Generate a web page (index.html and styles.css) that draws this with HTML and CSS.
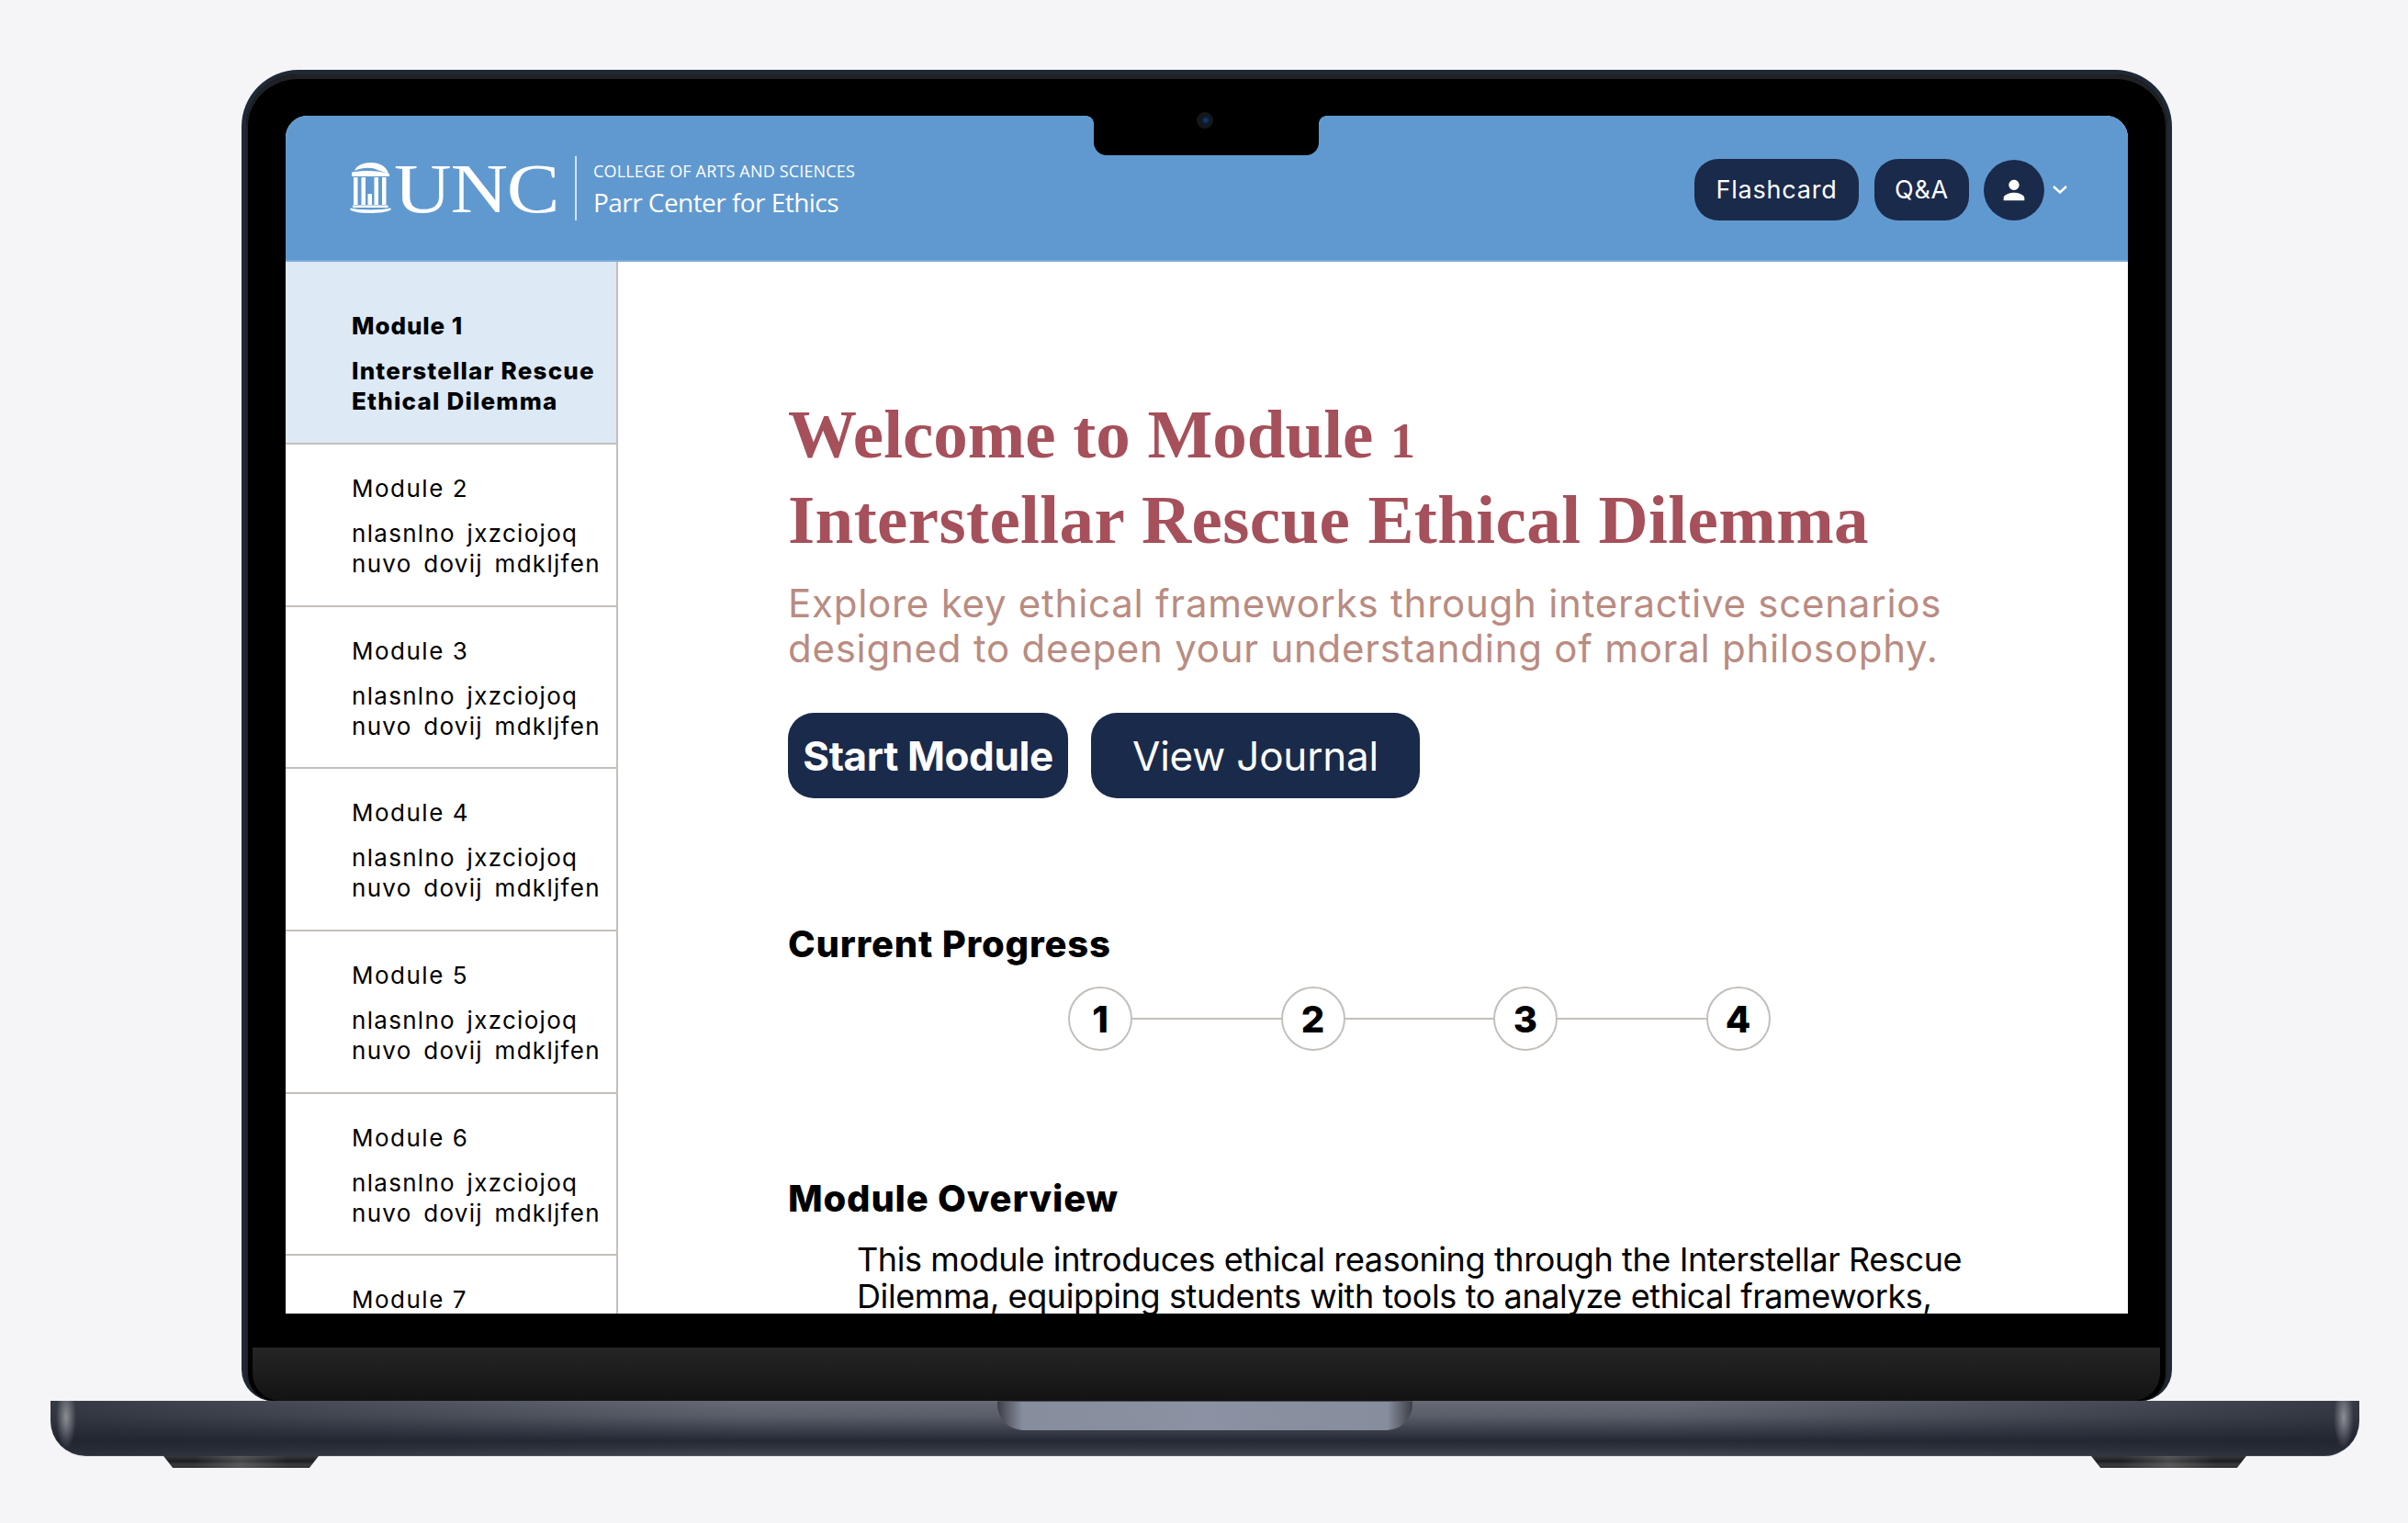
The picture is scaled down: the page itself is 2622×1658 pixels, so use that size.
FILE: index.html
```html
<!DOCTYPE html>
<html lang="en">
<head>
    <meta charset="UTF-8">
    <meta name="viewport" content="width=device-width, initial-scale=1.0">
    <title>Parr Center for Ethics</title>
    <link rel="stylesheet" href="styles.css">
</head>
<body>
    <div class="laptop">
        <div class="lid">
            <div class="bezel">
                <div class="notch"><span class="camera"></span></div>
                <div class="screen">
                    <div class="navbar">
                        <div class="brand">
                            <svg class="well" viewBox="0 0 45 55" fill="#fff">
                                <path d="M5 9C7 3 15 0 23 0c9 0 17 4 19 12L30 8C24 5 14 5 5 9z"/>
                                <path d="M2 10.500c12-2.500 29-2 41 1.500v3H2z"/>
                                <rect x="4" y="16" width="4.500" height="30"/>
                                <rect x="12.500" y="16" width="4.500" height="30"/>
                                <rect x="26.500" y="16" width="4.500" height="30"/>
                                <rect x="35" y="16" width="4.500" height="30"/>
                                <rect x="19.500" y="34" width="4.500" height="12"/>
                                <path d="M3 46.500h38l1 2.500H3z"/>
                                <path d="M1 49.500c10 2.500 33 2.500 43 0l1 1.500c-4 3-14 4-24 4-10 0-18-1.500-21-4z"/>
                            </svg>
                            <div class="unc-box"><span class="unc">UNC</span></div>
                            <div class="brand-text">
                                <span class="college">COLLEGE OF ARTS AND SCIENCES</span>
                                <span class="center">Parr Center for Ethics</span>
                            </div>
                        </div>
                        <div class="nav-actions">
                            <a class="pill pill-flash" href="#">Flashcard</a>
                            <a class="pill pill-qa" href="#">Q&amp;A</a>
                            <a class="avatar" href="#">
                                <svg viewBox="0 0 24 24" width="34" height="34" fill="#fff"><path d="M12 12c2.210 0 4-1.790 4-4s-1.790-4-4-4-4 1.790-4 4 1.790 4 4 4zm0 2c-2.670 0-8 1.340-8 4v2h16v-2c0-2.660-5.330-4-8-4z"/></svg>
                            </a>
                            <svg class="chevron" viewBox="0 0 16 9" width="16" height="9" fill="none" stroke="#fff" stroke-width="2.400"><path d="M1 1l7 6.500L15 1"/></svg>
                        </div>
                    </div>
                    <div class="content">
                        <ul class="sidebar">
                            <li class="module active">
                                <div class="module-name">Module 1</div>
                                <div class="module-title">Interstellar Rescue Ethical Dilemma</div>
                            </li>
                            <li class="module">
                                <div class="module-name">Module 2</div>
                                <div class="module-title">nlasnlno jxzciojoq nuvo dovij mdkljfen</div>
                            </li>
                            <li class="module">
                                <div class="module-name">Module 3</div>
                                <div class="module-title">nlasnlno jxzciojoq nuvo dovij mdkljfen</div>
                            </li>
                            <li class="module">
                                <div class="module-name">Module 4</div>
                                <div class="module-title">nlasnlno jxzciojoq nuvo dovij mdkljfen</div>
                            </li>
                            <li class="module">
                                <div class="module-name">Module 5</div>
                                <div class="module-title">nlasnlno jxzciojoq nuvo dovij mdkljfen</div>
                            </li>
                            <li class="module">
                                <div class="module-name">Module 6</div>
                                <div class="module-title">nlasnlno jxzciojoq nuvo dovij mdkljfen</div>
                            </li>
                            <li class="module">
                                <div class="module-name">Module 7</div>
                            </li>
                        </ul>
                        <div class="main-content">
                            <h1><span class="first-line">Welcome to Module <span class="oldstyle">1</span></span><br>Interstellar Rescue Ethical Dilemma</h1>
                            <p class="lead">Explore key ethical frameworks through interactive scenarios<br>designed to deepen your understanding of moral philosophy.</p>
                            <div class="hero-actions">
                                <a class="btn btn-start" href="#">Start Module</a>
                                <a class="btn btn-journal" href="#">View Journal</a>
                            </div>
                            <h2 class="progress-title">Current Progress</h2>
                            <div class="steps">
                                <span class="step">1</span>
                                <span class="step-line"></span>
                                <span class="step">2</span>
                                <span class="step-line"></span>
                                <span class="step">3</span>
                                <span class="step-line"></span>
                                <span class="step">4</span>
                            </div>
                            <h2 class="overview-title">Module Overview</h2>
                            <p class="overview">This module introduces ethical reasoning through the Interstellar Rescue<br>Dilemma, equipping students with tools to analyze ethical frameworks,</p>
                        </div>
                    </div>
                </div>
                <div class="chin"></div>
            </div>
        </div>
        <div class="base"><div class="hinge"></div></div>
        <div class="feet">
            <span class="foot"></span>
            <span class="foot"></span>
        </div>
    </div>
</body>
</html>
```

FILE: styles.css
```css
* {
    box-sizing: border-box;
}

body {
    font-family: 'Inter', sans-serif;
    margin: 0;
    height: 1658px;
    overflow: hidden;
    background-color: #f5f5f8;
    padding: 76px 0 0 55px;
}

a {
    text-decoration: none;
    color: #fff;
}

.laptop {
    width: 2514px;
}

/* lid */
.lid {
    width: 2102px;
    height: 1449px;
    margin-left: 208px;
    border: 5px solid #1e2935;
    border-bottom: none;
    border-radius: 62px 62px 34px 34px;
    background-color: #000;
}

.bezel {
    position: relative;
    height: 100%;
    padding-top: 40px;
    background-color: #000;
    border: solid #202124;
    border-width: 5px 2px 0;
    border-radius: 57px 57px 30px 30px;
}

.notch {
    position: absolute;
    top: 40px;
    left: 921px;
    width: 245px;
    height: 43px;
    background-color: #000;
    border-radius: 0 0 14px 14px;
    z-index: 2;
}

.notch::before,
.notch::after {
    content: '';
    position: absolute;
    top: 0;
    width: 8px;
    height: 8px;
}

.notch::before {
    left: -8px;
    background: radial-gradient(circle at 0 100%, transparent 7.500px, #000 8px);
}

.notch::after {
    right: -8px;
    background: radial-gradient(circle at 100% 100%, transparent 7.500px, #000 8px);
}

.camera {
    position: absolute;
    top: -4px;
    left: 112px;
    width: 18px;
    height: 18px;
    border-radius: 50%;
    background: radial-gradient(circle at 55% 50%, #16407e 0, #0c1a2c 32%, #151719 50%, #151719 100%);
}

.screen {
    width: 2006px;
    height: 1304px;
    margin-left: 41px;
    border-radius: 24px 24px 0 0;
    background-color: #fff;
    overflow: hidden;
    color: #000;
}

.chin {
    height: 58px;
    margin: 37px 6px 0 5px;
    border-radius: 0 0 30px 30px;
    background: linear-gradient(#252525, #131313);
}

/* navbar */
.navbar {
    height: 159px;
    padding: 47px 66px 47px 70px;
    display: flex;
    justify-content: space-between;
    align-items: center;
    background-color: #6099d0;
    border-bottom: 2px solid #7fabd9;
}

.brand {
    display: flex;
    align-items: center;
    color: #fff;
}

.well {
    width: 45px;
    height: 55px;
    flex: none;
}

.unc-box {
    width: 197px;
    margin-left: 3px;
    padding-top: 3px;
}

.unc {
    display: inline-block;
    font-family: 'Liberation Serif', serif;
    font-size: 76px;
    line-height: 55px;
    letter-spacing: -1px;
    transform: scaleX(1.14);
    transform-origin: left center;
}

.brand-text {
    height: 70px;
    padding: 1px 0 2px 18px;
    border-left: 2px solid #d6e4f2;
    display: flex;
    flex-direction: column;
    justify-content: space-between;
}

.college {
    font-family: 'Open Sans', sans-serif;
    font-size: 18px;
    line-height: 30px;
    letter-spacing: 0.16px;
}

.center {
    font-family: 'Open Sans', sans-serif;
    font-size: 28px;
    line-height: 36px;
    letter-spacing: -0.55px;
}

.nav-actions {
    display: flex;
    align-items: center;
    margin-top: 4px;
}

.pill {
    height: 67px;
    display: flex;
    align-items: center;
    justify-content: center;
    background-color: #1a2a4b;
    border-radius: 26px;
    font-size: 27px;
    letter-spacing: 0.8px;
}

.pill-flash {
    width: 179px;
}

.pill-qa {
    width: 103px;
    margin-left: 17px;
}

.avatar {
    width: 66px;
    height: 66px;
    margin-left: 16px;
    border-radius: 50%;
    background-color: #1a2a4b;
    display: flex;
    align-items: center;
    justify-content: center;
}

.chevron {
    margin-left: 9px;
    flex: none;
}

/* sidebar + main */
.content {
    display: flex;
    height: 1145px;
}

.sidebar {
    list-style-type: none;
    margin: 0;
    padding: 0;
    width: 362px;
    flex: none;
    border-right: 2px solid #c4bfba;
}

.module {
    height: 176.700px;
    padding: 31px 4px 0 72px;
    border-bottom: 2px solid #c4bfba;
    font-size: 26px;
    line-height: 33px;
    letter-spacing: 1.5px;
}

.module-title {
    letter-spacing: 1.3px;
    word-spacing: 4px;
}

.module.active {
    height: 199px;
    padding-top: 53px;
    background-color: #dde9f5;
    font-weight: 800;
    letter-spacing: 0.9px;
}

.module.active .module-title {
    letter-spacing: 1.2px;
    word-spacing: 0;
}

.module-name {
    margin-bottom: 16px;
}

.main-content {
    flex: 1;
    padding: 141px 0 0 185px;
    overflow: hidden;
}

h1 {
    margin: 0;
    font-family: 'Liberation Serif', serif;
    font-size: 75px;
    line-height: 93px;
    font-weight: 700;
    letter-spacing: 0.4px;
    color: #a5505a;
}

.first-line {
    letter-spacing: 0;
}

.oldstyle {
    font-size: 54px;
    line-height: 0;
}

.lead {
    margin: 21px 0 0;
    font-size: 42px;
    line-height: 48.500px;
    letter-spacing: 0.75px;
    color: #b98c82;
}

.hero-actions {
    display: flex;
    gap: 25px;
    margin-top: 46px;
}

.btn {
    height: 93px;
    display: flex;
    align-items: center;
    justify-content: center;
    background-color: #1a2a4b;
    border-radius: 28px;
    font-size: 44px;
}

.btn-start {
    width: 305px;
    font-weight: 700;
    letter-spacing: -0.4px;
}

.btn-journal {
    width: 358px;
    letter-spacing: -0.2px;
}

h2 {
    margin: 0;
    font-size: 40px;
    line-height: 48px;
    font-weight: 800;
    letter-spacing: 0.8px;
}

.progress-title {
    margin-top: 135px;
}

.steps {
    display: flex;
    align-items: center;
    margin: 22px 0 0 305px;
}

.step {
    width: 70px;
    height: 70px;
    flex: none;
    display: flex;
    align-items: center;
    justify-content: center;
    border: 2px solid #c4bfba;
    border-radius: 50%;
    font-size: 40px;
    font-weight: 800;
}

.step-line {
    width: 161.500px;
    height: 2px;
    background-color: #c4bfba;
}

.overview-title {
    margin-top: 137px;
}

.overview {
    margin: 22px 0 0;
    padding-left: 75px;
    font-size: 36px;
    line-height: 40px;
    letter-spacing: -0.4px;
    white-space: nowrap;
}

/* base */
.base {
    height: 60px;
    display: flex;
    justify-content: center;
    border-radius: 0 0 38px 38px;
    box-shadow: 0 1px 0 #d8d9de;
    background:
        radial-gradient(ellipse 11px 34px at 17px 18px, rgba(190, 190, 195, 0.65), transparent),
        radial-gradient(ellipse 11px 34px at calc(100% - 17px) 18px, rgba(190, 190, 195, 0.65), transparent),
        linear-gradient(90deg, rgba(32, 36, 46, 0.7), transparent 30%, transparent 70%, rgba(32, 36, 46, 0.7)),
        linear-gradient(#666b75 0, #585d68 28%, #3e434f 50%, #242934 72%, #2c313c 82%, #40454f 100%);
}

.hinge {
    width: 452px;
    height: 32px;
    border-radius: 0 0 28px 28px;
    border-top: 1px solid #4a4d55;
    background: linear-gradient(90deg, #3d3f46 0, #868d9c 6%, #8a92a3 50%, #868d9c 94%, #3d3f46 100%);
}

.feet {
    display: flex;
    justify-content: space-between;
    padding: 0 123px;
}

.foot {
    width: 169px;
    height: 13px;
    clip-path: polygon(0 0, 100% 0, 94% 100%, 6% 100%);
    background:
        linear-gradient(90deg, transparent 20%, rgba(150, 150, 150, 0.35) 50%, transparent 80%),
        linear-gradient(#34373d 0, #1c1d20 45%, #38393c 70%, #333 100%);
}
```
